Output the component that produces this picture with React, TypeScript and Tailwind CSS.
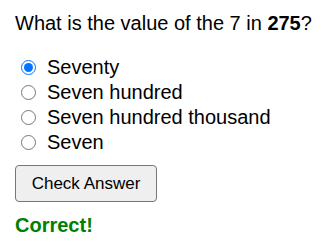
export default function App() {
  const options = ["Seventy", "Seven hundred", "Seven hundred thousand", "Seven"];
  return (
    <div className="w-[322px] h-[245px] bg-white text-black font-['Liberation_Sans',Arial,sans-serif] pl-[15px] pt-[12px]">
      <div className="text-[20px] leading-[23px]">
        What is the value of the 7 in <b>275</b>?
      </div>
      <div className="mt-[20px] flex flex-col">
        {options.map((o, i) => (
          <label key={o} className="flex items-center h-[25px] text-[20px] leading-[25px]">
            <input
              type="radio"
              name="q"
              defaultChecked={i === 0}
              className="w-[15px] h-[15px] m-0 ml-[6px] mr-[11px]"
            />
            <span>{o}</span>
          </label>
        ))}
      </div>
      <button className="mt-[10px] w-[142px] h-[37px] bg-[#efefef] border border-[#767676] rounded-[4px] text-[17px] text-black">
        Check Answer
      </button>
      <div className="mt-[12px] text-[20px] font-bold text-[#008000] leading-[23px]">Correct!</div>
    </div>
  );
}
